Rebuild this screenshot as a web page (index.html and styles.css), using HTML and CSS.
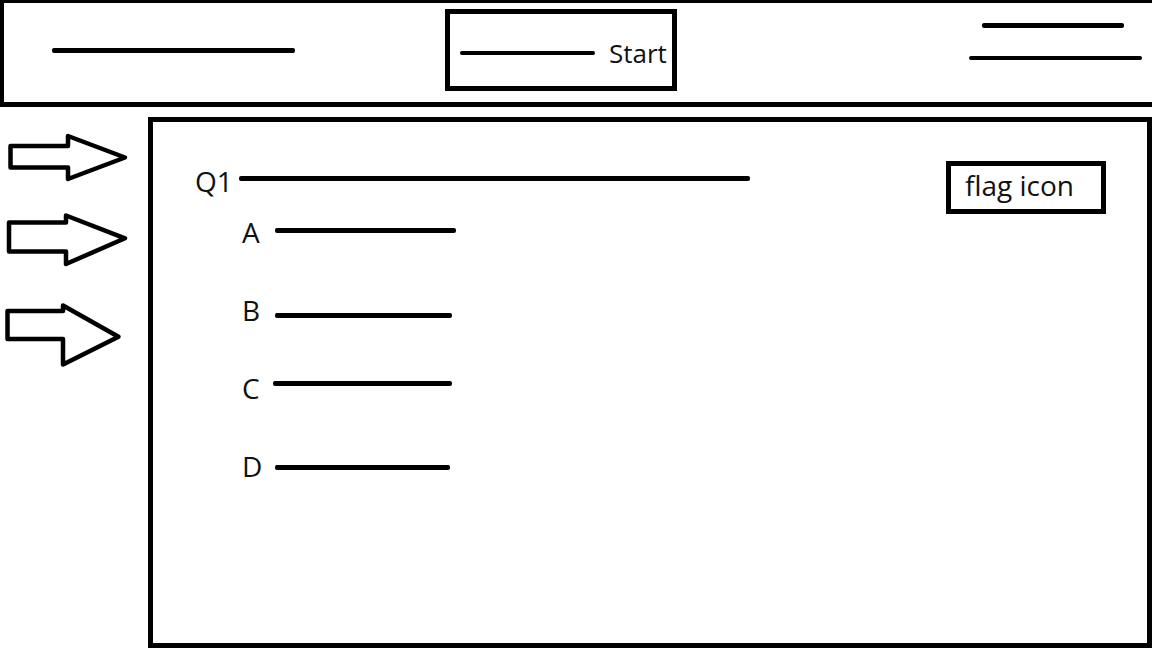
FILE: index.html
```html
<!DOCTYPE html>
<html lang="en">
<head>
<meta charset="utf-8">
<title>Quiz wireframe</title>
<link rel="stylesheet" href="styles.css">
</head>
<body>
<header class="topbar">
  <span class="line line-title"></span>
  <div class="start-box">
    <span class="line line-start"></span>
    <span class="start-label">Start</span>
  </div>
  <div class="top-right">
    <span class="line line-r1"></span>
    <span class="line line-r2"></span>
  </div>
</header>
<div class="workspace">
  <aside class="sidebar">
    <svg class="arrow arrow-1" width="140" height="50" viewBox="0 0 140 50">
      <polygon points="10.5,13 68,13 68,3 125,24.5 68,46 68,34.5 10.5,34.5"/>
    </svg>
    <svg class="arrow arrow-2" width="140" height="57" viewBox="0 0 140 57">
      <polygon points="9,11.5 66,11.5 66,4.5 125,27.3 66,53 66,40.5 9,40.5"/>
    </svg>
    <svg class="arrow arrow-3" width="140" height="68" viewBox="0 0 140 68">
      <polygon points="7.5,10 63,10 63,4.5 118.5,35.7 63,63.5 63,38 7.5,38"/>
    </svg>
  </aside>
  <main class="question-card">
    <div class="question-row">
      <div class="question">
        <span class="q-label">Q1</span>
        <span class="line line-q"></span>
      </div>
      <div class="flag-box">flag icon</div>
    </div>
    <ul class="options">
      <li class="option option-a"><span class="opt-label">A</span><span class="line line-opt"></span></li>
      <li class="option option-b"><span class="opt-label">B</span><span class="line line-opt"></span></li>
      <li class="option option-c"><span class="opt-label">C</span><span class="line line-opt"></span></li>
      <li class="option option-d"><span class="opt-label">D</span><span class="line line-opt"></span></li>
    </ul>
  </main>
</div>
</body>
</html>
```
FILE: styles.css
```css
* { box-sizing: border-box; }
html, body {
  margin: 0;
  padding: 0;
  background: #fff;
}
body {
  width: 1152px;
  height: 648px;
  overflow: hidden;
  font-family: "Open Sans", "Noto Sans", sans-serif;
  font-size: 28px;
  color: #111;
}
.line {
  display: block;
  height: 4.5px;
  background: #000;
  border-radius: 2px;
  flex: none;
}

/* header */
.topbar {
  display: flex;
  align-items: flex-start;
  height: 107px;
  border-top: 3px solid #000;
  border-left: 4px solid #000;
  border-bottom: 5px solid #000;
}
.line-title {
  width: 243px;
  margin-left: 48px;
  margin-top: 45px;
}
.start-box {
  display: flex;
  align-items: center;
  width: 232px;
  height: 82px;
  margin-left: 150px;
  margin-top: 6px;
  border: 5px solid #000;
  padding: 6px 0 0 10px;
}
.line-start {
  width: 135px;
}
.start-label {
  margin-left: 14px;
  font-size: 26px;
  line-height: 34px;
}
.top-right {
  display: flex;
  flex-direction: column;
  align-items: flex-end;
  margin-left: auto;
  margin-right: 10px;
  margin-top: 20px;
}
.line-r1 {
  width: 142px;
  margin-right: 18px;
}
.line-r2 {
  width: 173px;
  margin-top: 28px;
}

/* body */
.workspace {
  display: flex;
  margin-top: 10px;
}
.sidebar {
  width: 148px;
  flex: none;
  display: flex;
  flex-direction: column;
}
.arrow {
  display: block;
  fill: none;
  stroke: #000;
  stroke-width: 4.5;
  stroke-linejoin: round;
}
.arrow-1 { margin-top: 16px; }
.arrow-2 { margin-top: 28px; }
.arrow-3 { margin-top: 33px; }

.question-card {
  flex: 1;
  height: 531px;
  border: 5px solid #000;
  padding: 39px 41px 0 42px;
}
.question-row {
  display: flex;
  justify-content: space-between;
  align-items: flex-start;
}
.question {
  display: flex;
  align-items: flex-start;
}
.q-label {
  line-height: 34px;
  margin-top: 3px;
}
.line-q {
  width: 511px;
  margin-left: 6px;
  margin-top: 15px;
}
.flag-box {
  display: flex;
  align-items: center;
  width: 160px;
  height: 53px;
  border: 5px solid #000;
  padding: 0 0 5px 14px;
  line-height: 34px;
}

.options {
  list-style: none;
  margin: 1px 0 0;
  padding: 0 0 0 47px;
  display: flex;
  flex-direction: column;
  gap: 44px;
}
.option {
  display: flex;
  align-items: flex-start;
  height: 34px;
  line-height: 34px;
}
.opt-label {
  width: 33px;
  flex: none;
}
.option-a .line-opt { width: 181px; margin-top: 13px; }
.option-b .line-opt { width: 177px; margin-top: 20px; }
.option-c .line-opt { width: 179px; margin-top: 10px; margin-left: -2px; }
.option-d .line-opt { width: 175px; margin-top: 16px; }
```
